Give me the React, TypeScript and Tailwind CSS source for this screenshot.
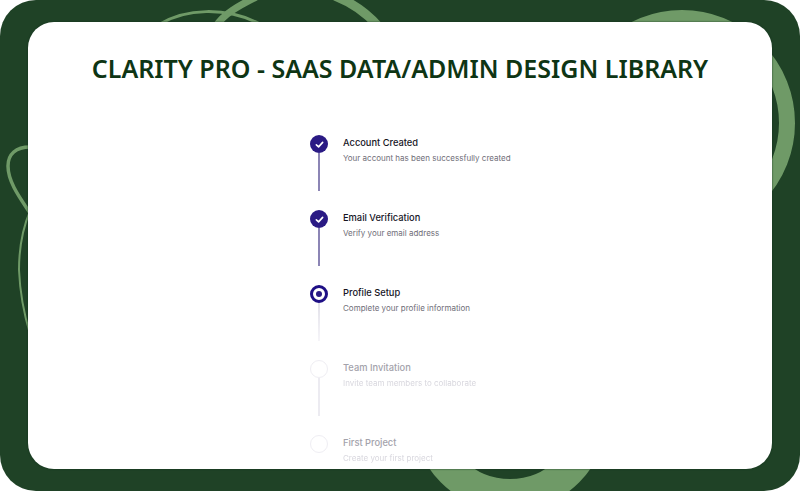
const steps = [
  { title: "Account Created", text: "Your account has been successfully created", state: "done" },
  { title: "Email Verification", text: "Verify your email address", state: "done" },
  { title: "Profile Setup", text: "Complete your profile information", state: "current" },
  { title: "Team Invitation", text: "Invite team members to collaborate", state: "todo" },
  { title: "First Project", text: "Create your first project", state: "last" },
];

function Marker({ state }: { state: string }) {
  if (state === "done") {
    return (
      <div className="w-[18px] h-[18px] rounded-full bg-[#2a1a84] flex items-center justify-center">
        <svg width="9" height="9" viewBox="0 0 10 10" fill="none" stroke="white" strokeWidth="1.8" strokeLinecap="round" strokeLinejoin="round">
          <path d="M1.5 5.4 4 7.6 8.5 2.6" />
        </svg>
      </div>
    );
  }
  if (state === "current") {
    return (
      <div className="w-[18px] h-[18px] rounded-full border-[3px] border-[#1e0f85] bg-white flex items-center justify-center">
        <div className="w-[6px] h-[6px] rounded-full bg-[#2a1a84]" />
      </div>
    );
  }
  return <div className="w-[18px] h-[18px] rounded-full border-[1.5px] border-[#efeef3] bg-white" />;
}

export default function App() {
  return (
    <div className="w-[800px] h-[491px] bg-white overflow-hidden">
      <div className="relative w-full h-full bg-[#1f4226] rounded-[36px] overflow-hidden px-[28px] pt-[22px] pb-[22px]">
        <svg className="absolute inset-0" width="800" height="491" viewBox="0 0 800 491" fill="none" stroke="#6f9a67">
          <circle cx="682" cy="123" r="105" strokeWidth="16" />
          <circle cx="510" cy="413" r="82" strokeWidth="32" />
          <path d="M160 24C185 9 225 6 260 24" strokeWidth="3" />
          <path d="M216 26C224 14 238 6 256 -3" strokeWidth="7" />
          <path d="M335 -4C350 2 366 12 378 26" strokeWidth="9" />
          <path d="M30 147C16 147 8 154 8 166C8 182 20 198 30 213" strokeWidth="3.5" />
          <path d="M30 211C22 230 19 250 19 270C20 294 24 314 30 334" strokeWidth="2" />
        </svg>
        <div className="relative h-full bg-white rounded-[26px] overflow-hidden shadow-[0_0_2px_#10301a]">
          <h1 className="mt-[28px] text-center text-[25px] leading-[36px] font-semibold text-[#0e3514] font-['Noto_Sans',sans-serif]">
            CLARITY PRO - SAAS DATA/ADMIN DESIGN LIBRARY
          </h1>
          <div className="mt-[49px] ml-[282px] flex flex-col font-['Inter',sans-serif]">
            {steps.map((s) => (
              <div key={s.title} className="flex gap-[15px] h-[75px]">
                <div className="flex flex-col items-center w-[18px]">
                  <Marker state={s.state} />
                  {s.state === "done" && <div className="w-[2px] h-[38px] bg-[#8c85b5]" />}
                  {s.state === "current" && <div className="w-[2px] h-[38px] bg-gradient-to-b from-[#e2e1e9] to-[#f6f5f9]" />}
                  {s.state === "todo" && <div className="w-[2px] h-[38px] bg-[#ecebf1]" />}
                </div>
                <div className="pt-[0.5px]">
                  <div className={"text-[9.3px] leading-[14px] font-medium " + (s.state === "todo" || s.state === "last" ? "text-[#a3a2ab]" : "text-[#16151f]")}>
                    {s.title}
                  </div>
                  <div className={"mt-[1px] text-[8px] leading-[14px] " + (s.state === "todo" || s.state === "last" ? "text-[#d8d7de] blur-[0.4px]" : "text-[#6f6e78]")}>
                    {s.text}
                  </div>
                </div>
              </div>
            ))}
          </div>
        </div>
      </div>
    </div>
  );
}
